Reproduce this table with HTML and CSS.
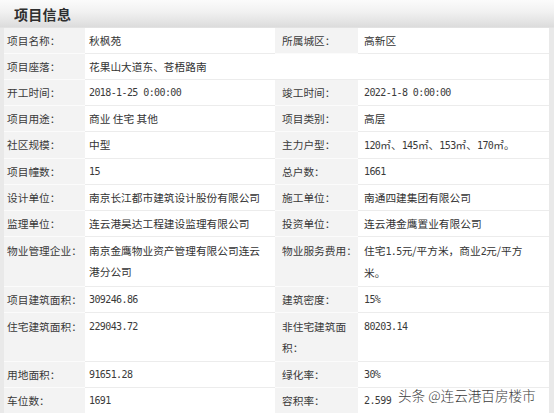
FILE: index.html
```html
<!DOCTYPE html>
<html lang="zh-CN">
<head>
<meta charset="utf-8">
<title>项目信息</title>
<link rel="stylesheet" href="styles.css">
</head>
<body>
<div class="panel">
  <div class="hd"><h2 class="title">项目信息</h2></div>
  <div class="body">
    <div class="grid">
      <div class="lb">项目名称：</div><div class="val">秋枫苑</div>
      <div class="lb l2">所属城区：</div><div class="val v2">高新区</div>

      <div class="lb">项目座落：</div><div class="val span3">花果山大道东、苍梧路南</div>

      <div class="lb">开工时间：</div><div class="val num">2018-1-25 0:00:00</div>
      <div class="lb l2">竣工时间：</div><div class="val v2 num">2022-1-8 0:00:00</div>

      <div class="lb">项目用途：</div><div class="val">商业 住宅 其他</div>
      <div class="lb l2">项目类别：</div><div class="val v2">高层</div>

      <div class="lb">社区规模：</div><div class="val">中型</div>
      <div class="lb l2">主力户型：</div><div class="val v2"><span class="n">120</span>㎡、<span class="n">145</span>㎡、<span class="n">153</span>㎡、<span class="n">170</span>㎡。</div>

      <div class="lb">项目幢数：</div><div class="val num">15</div>
      <div class="lb l2">总户数：</div><div class="val v2 num">1661</div>

      <div class="lb">设计单位：</div><div class="val">南京长江都市建筑设计股份有限公司</div>
      <div class="lb l2">施工单位：</div><div class="val v2">南通四建集团有限公司</div>

      <div class="lb">监理单位：</div><div class="val">连云港昊达工程建设监理有限公司</div>
      <div class="lb l2">投资单位：</div><div class="val v2">连云港金鹰置业有限公司</div>

      <div class="lb tall">物业管理企业：</div><div class="val tall">南京金鹰物业资产管理有限公司连云<br>港分公司</div>
      <div class="lb l2 tall">物业服务费用：</div><div class="val v2 tall">住宅<span class="n">1.5</span>元/平方米，商业<span class="n">2</span>元/平方<br>米。</div>

      <div class="lb">项目建筑面积：</div><div class="val num">309246.86</div>
      <div class="lb l2">建筑密度：</div><div class="val v2 num">15%</div>

      <div class="lb tall">住宅建筑面积：</div><div class="val tall num">229043.72</div>
      <div class="lb l2 tall">非住宅建筑面<br>积：</div><div class="val v2 tall num">80203.14</div>

      <div class="lb">用地面积：</div><div class="val num">91651.28</div>
      <div class="lb l2">绿化率：</div><div class="val v2 num">30%</div>

      <div class="lb">车位数：</div><div class="val num">1691</div>
      <div class="lb l2">容积率：</div><div class="val v2 num">2.599</div>
    </div>
  </div>
  <div class="watermark">头条 @连云港百房楼市</div>
</div>
</body>
</html>
```

FILE: styles.css
```css
html, body {
  margin: 0;
  padding: 0;
  background: #ffffff;
}

.panel {
  position: relative;
  width: 554px;
  height: 413px;
  overflow: hidden;
  background: #e9e9e9;
  font-family: "Noto Sans CJK SC", "Noto Sans", sans-serif;
  color: #333333;
}

.hd {
  height: 27px;
  border-bottom: 1px solid #e2e2e2;
  background: linear-gradient(to bottom, #fbfbfb 0%, #f1f1f1 45%, #dcdcdc 100%);
  display: flex;
  align-items: center;
  padding-left: 14px;
}

.title {
  margin: 0;
  font-size: 14px;
  font-weight: 700;
  color: #2e2e2e;
  letter-spacing: 0.3px;
}

.body {
  padding: 0 5px 0 4px;
}

.grid {
  display: grid;
  grid-template-columns: 81px 190px 83px 191px;
}

.lb,
.val {
  font-size: 10.7px;
  line-height: 21px;
  padding: 2px 0 2px 0;
  border-bottom: 1px solid #ececec;
  white-space: nowrap;
}

.lb {
  background: #f3f3f3;
  color: #3a3a3a;
  padding-left: 3px;
  border-bottom-color: #fbfbfb;
}

.lb.l2 {
  padding-left: 7px;
}

.val {
  background: #ffffff;
  padding-left: 4px;
}

.val.v2 {
  padding-left: 6px;
}

.span3 {
  grid-column: span 3;
}

.tall {
  padding-top: 3px;
  padding-bottom: 3px;
}

.num,
.n {
  font-family: "DejaVu Sans Mono", "Liberation Mono", monospace;
  font-size: 10px;
  letter-spacing: -0.6px;
  color: #3a3a3a;
}

.watermark {
  position: absolute;
  left: 398px;
  top: 385px;
  font-family: "Noto Sans CJK SC", sans-serif;
  font-weight: 300;
  font-size: 13.6px;
  line-height: 20px;
  color: #3c3c3c;
  text-shadow: 0 0 2px #ffffff, 0 0 2px #ffffff;
  white-space: nowrap;
}
```
